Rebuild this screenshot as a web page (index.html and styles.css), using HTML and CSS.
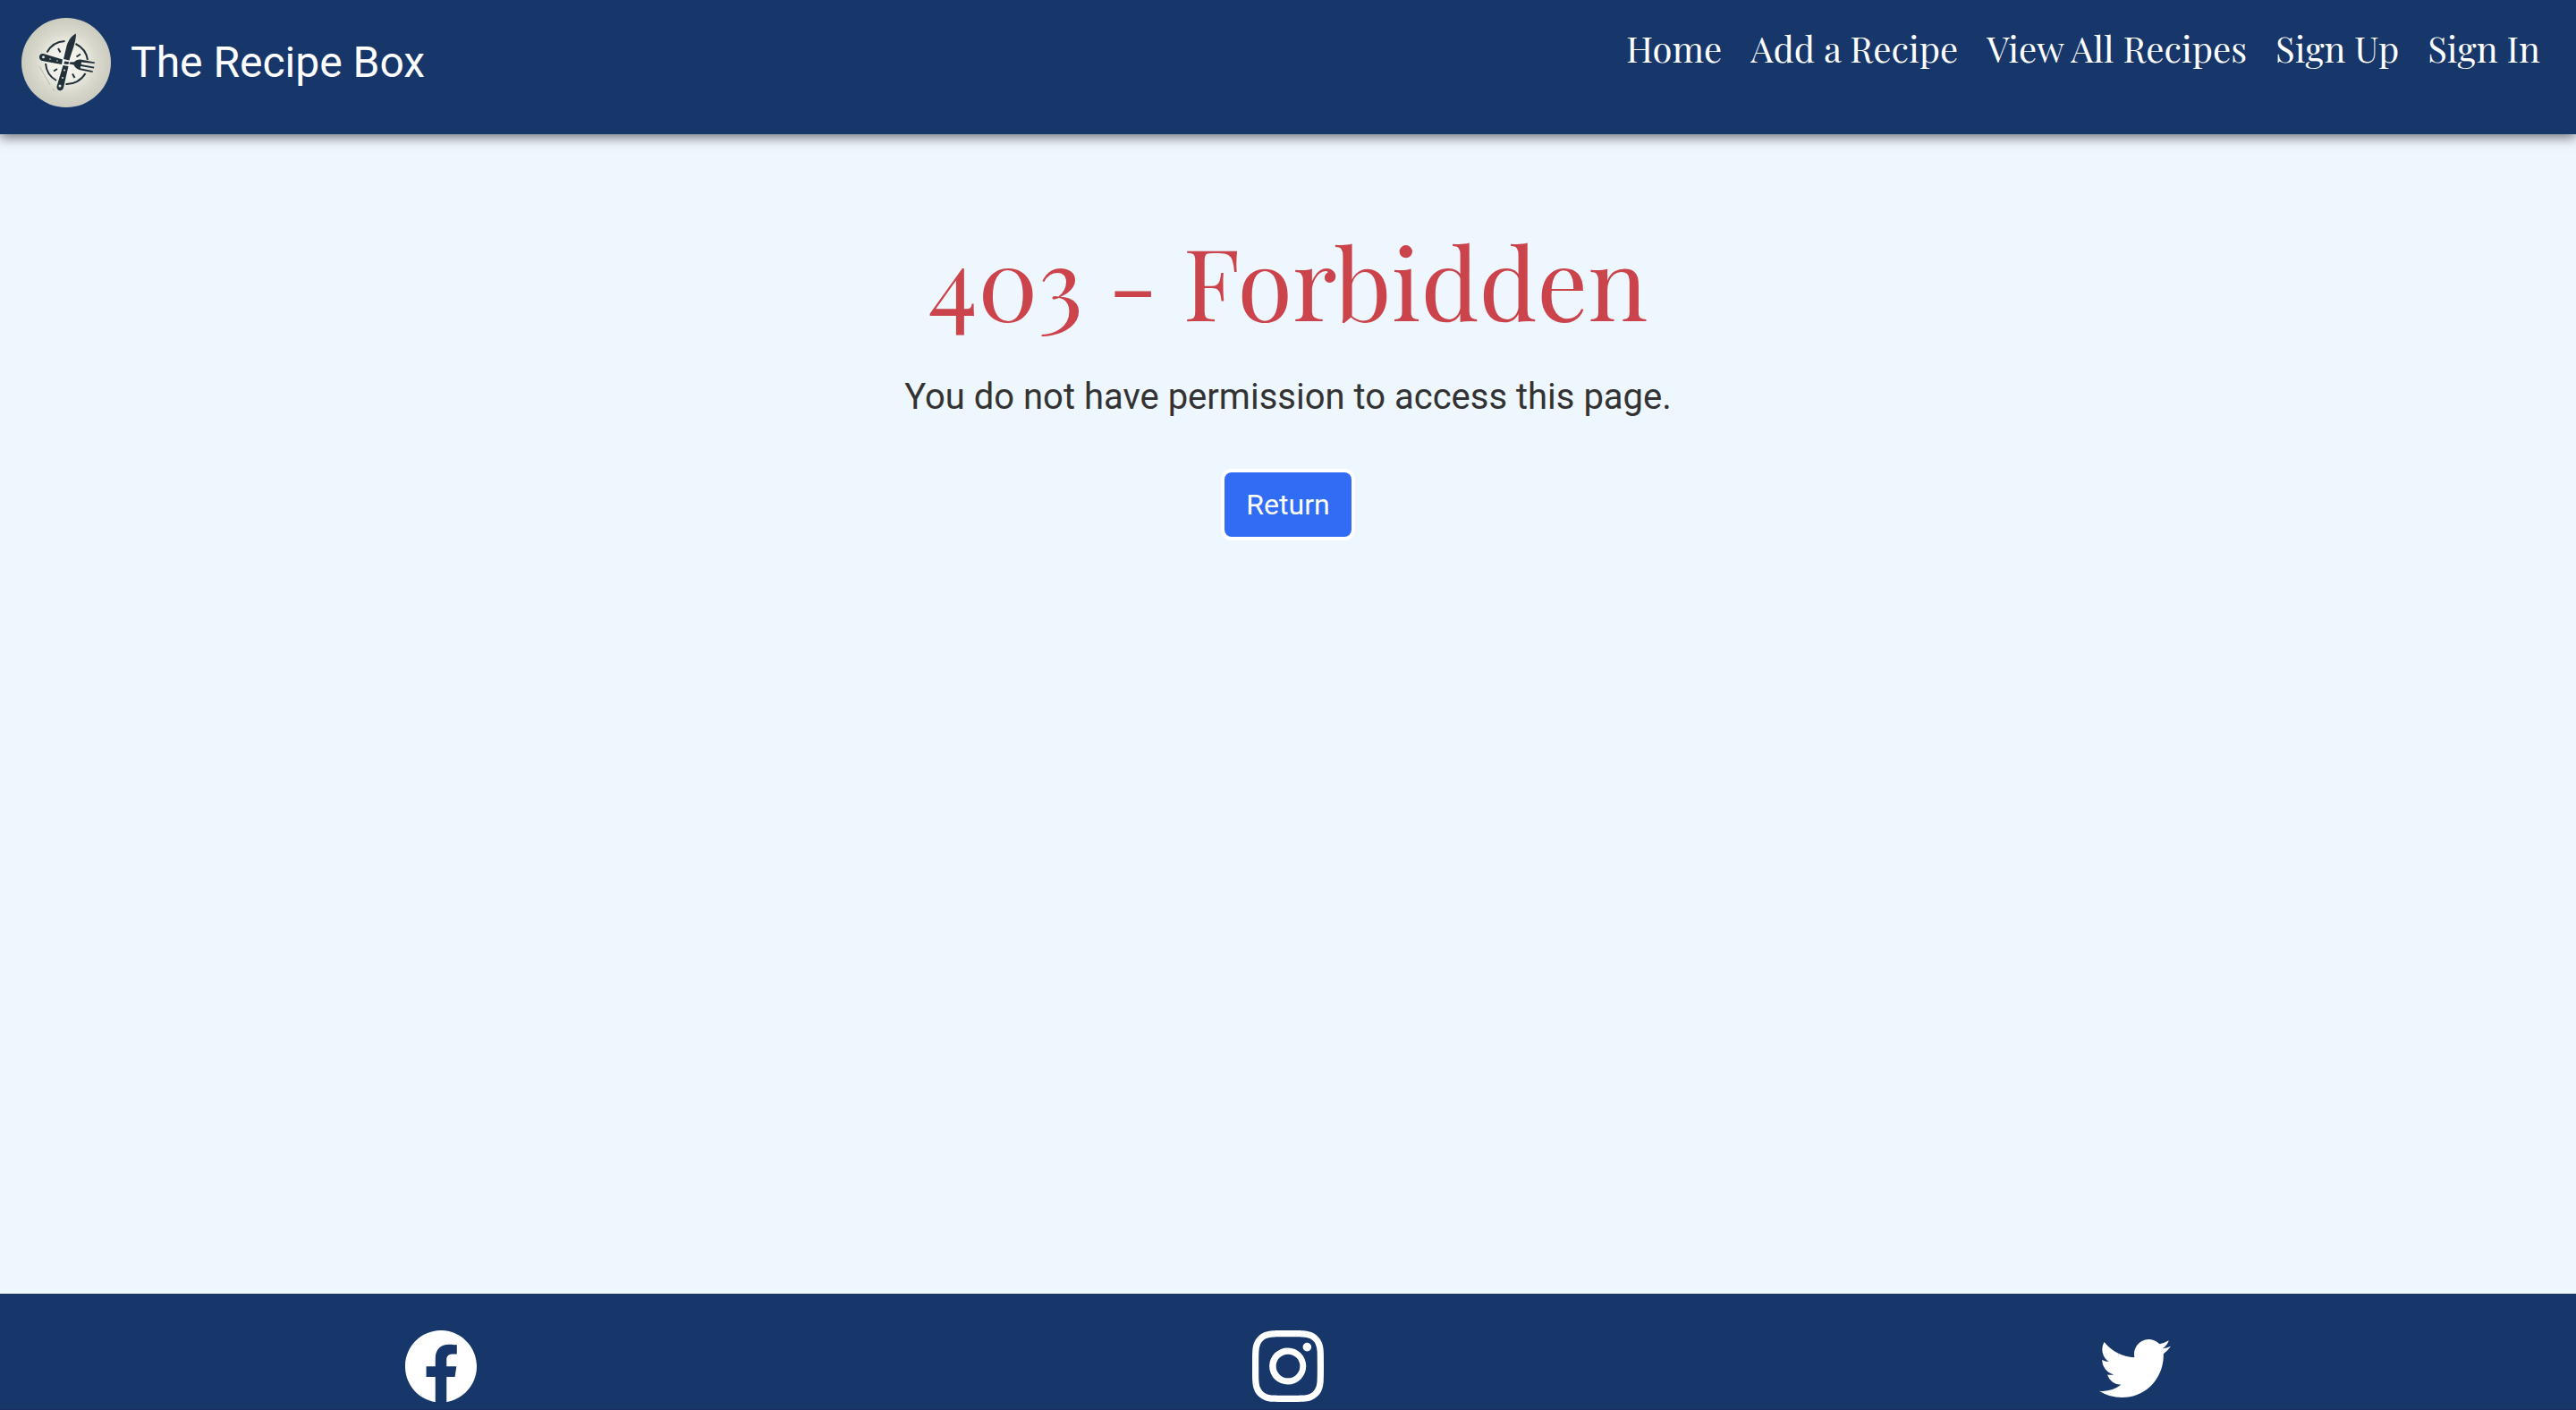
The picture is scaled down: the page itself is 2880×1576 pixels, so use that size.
FILE: index.html
```html
<!DOCTYPE html>
<html lang="en">
<head>
<meta charset="utf-8">
<title>403 - Forbidden | The Recipe Box</title>
<link rel="stylesheet" href="styles.css">
</head>
<body>
<header class="navbar">
  <a class="brand" href="#">
    <svg class="brand-logo" viewBox="0 0 100 100" aria-hidden="true">
      <defs>
        <radialGradient id="plate">
          <stop offset="0" stop-color="#f8f8f4"/>
          <stop offset=".4" stop-color="#efefe7"/>
          <stop offset=".68" stop-color="#d9d9ce"/>
          <stop offset="1" stop-color="#cccbbf"/>
        </radialGradient>
      </defs>
      <circle cx="50" cy="50" r="50" fill="url(#plate)"/>
      <g fill="none" stroke="#22303a" stroke-width="2">
        <path d="M28.500 38.500A24 24 0 0 1 48.500 26M60.500 29A24 24 0 0 1 74 47M71.500 62A24 24 0 0 1 49.500 74M39 70A24 24 0 0 1 27 51"/>
        <path d="M41 34l2.500 4.500M61.500 43.500l4.500-3M36 59.500l4-2.500M57 62.500l2.500 4.500"/>
      </g>
      <path d="M20 54l12 21M35 79l2 3" stroke="#b9b9b0" stroke-width="1" fill="none"/>
      <path fill="#22303a" d="M61 17.500c-6 3-9.500 9-11 16L47 46l6.500 1.500C56 38 61 28 61 17.500zM46.500 53l6 1-5.500 24c-1.500 5-8 4-7.500-1.500zM24.500 40l21.500 6.500-1 5.500-22-4c-5-2-3.500-9 1.500-8z"/>
      <path fill="#22303a" d="M48 48.500l5 .5-.5 3-5-.5zM54 49.500l5-.3c2-2 4-3 7-2.700l16 3-.3 1.600L67 49.500l-.3 2.500 14.600 2.800-.3 1.600-14.800-2.500-.4 2.400 14 3-.3 1.600-15-3c-3-1-5-3-6-5.400l-5-1z"/>
      <g fill="#e2e2da"><circle cx="24.500" cy="43.700" r="1.500"/><circle cx="32" cy="46" r=".8"/><circle cx="40" cy="48" r=".8"/><circle cx="43" cy="76" r="1.500"/><circle cx="46" cy="67" r="1"/><circle cx="48" cy="58.500" r="1"/></g>
    </svg>
    <span>The Recipe Box</span>
  </a>
  <nav class="nav-links" aria-label="Main">
    <a href="#">Home</a>
    <a href="#">Add a Recipe</a>
    <a href="#">View All Recipes</a>
    <a href="#">Sign Up</a>
    <a href="#">Sign In</a>
  </nav>
</header>
<main class="error-page">
  <h1>403 - Forbidden</h1>
  <p>You do not have permission to access this page.</p>
  <button class="btn" type="button">Return</button>
</main>
<footer class="footer">
  <a href="#" aria-label="Facebook"><svg viewBox="0 0 16 16"><path d="M16 8.049c0-4.446-3.582-8.050-8-8.050C3.580 0-.002 3.603-.002 8.050c0 4.017 2.926 7.347 6.750 7.951v-5.625h-2.030V8.050H6.750V6.275c0-2.017 1.195-3.131 3.022-3.131.876 0 1.791.157 1.791.157v1.980h-1.009c-.993 0-1.303.621-1.303 1.258v1.510h2.218l-.354 2.326H9.250V16c3.824-.604 6.750-3.934 6.750-7.951"/></svg></a>
  <a href="#" aria-label="Instagram"><svg viewBox="0 0 16 16"><path d="M8 0C5.829 0 5.556.010 4.703.048 3.850.088 3.269.222 2.760.420a3.900 3.900 0 0 0-1.417.923A3.900 3.900 0 0 0 .420 2.760C.222 3.268.087 3.850.048 4.700.010 5.555 0 5.827 0 8.001c0 2.172.010 2.444.048 3.297.040.852.174 1.433.372 1.942.205.526.478.972.923 1.417.444.445.890.719 1.416.923.510.198 1.090.333 1.942.372C5.555 15.990 5.827 16 8 16s2.444-.010 3.298-.048c.851-.040 1.434-.174 1.943-.372a3.900 3.900 0 0 0 1.416-.923c.445-.445.718-.891.923-1.417.197-.509.332-1.090.372-1.942C15.990 10.445 16 10.173 16 8s-.010-2.445-.048-3.299c-.040-.851-.175-1.433-.372-1.941a3.900 3.900 0 0 0-.923-1.417A3.900 3.900 0 0 0 13.240.420c-.510-.198-1.092-.333-1.943-.372C10.443.010 10.172 0 7.998 0zm-.717 1.442h.718c2.136 0 2.389.007 3.232.046.780.035 1.204.166 1.486.275.373.145.640.319.920.599s.453.546.598.920c.110.281.240.705.275 1.485.039.843.047 1.096.047 3.231s-.008 2.389-.047 3.232c-.035.780-.166 1.203-.275 1.485a2.500 2.500 0 0 1-.599.919c-.280.280-.546.453-.920.598-.280.110-.704.240-1.485.276-.843.038-1.096.047-3.232.047s-2.390-.009-3.233-.047c-.780-.036-1.203-.166-1.485-.276a2.500 2.500 0 0 1-.920-.598 2.500 2.500 0 0 1-.600-.920c-.109-.281-.240-.705-.275-1.485-.038-.843-.046-1.096-.046-3.233s.008-2.388.046-3.231c.036-.780.166-1.204.276-1.486.145-.373.319-.640.599-.920s.546-.453.920-.598c.282-.110.705-.240 1.485-.276.738-.034 1.024-.044 2.515-.045zm4.988 1.328a.960.960 0 1 0 0 1.920.960.960 0 0 0 0-1.920m-4.270 1.122a4.109 4.109 0 1 0 0 8.217 4.109 4.109 0 0 0 0-8.217m0 1.441a2.667 2.667 0 1 1 0 5.334 2.667 2.667 0 0 1 0-5.334"/></svg></a>
  <a href="#" aria-label="Twitter"><svg viewBox="0 0 16 16"><path d="M5.026 15c6.038 0 9.341-5.003 9.341-9.334q.002-.211-.006-.422A6.700 6.700 0 0 0 16 3.542a6.700 6.700 0 0 1-1.889.518 3.300 3.300 0 0 0 1.447-1.817 6.500 6.500 0 0 1-2.087.793A3.286 3.286 0 0 0 7.875 6.030a9.320 9.320 0 0 1-6.767-3.429 3.290 3.290 0 0 0 1.018 4.382A3.300 3.300 0 0 1 .640 6.575v.045a3.290 3.290 0 0 0 2.632 3.218 3.200 3.200 0 0 1-.865.115 3 3 0 0 1-.614-.057 3.280 3.280 0 0 0 3.067 2.277A6.600 6.600 0 0 1 .780 13.580a6 6 0 0 1-.780-.045A9.340 9.340 0 0 0 5.026 15"/></svg></a>
</footer>
</body>
</html>
```

FILE: styles.css
```css
*, *::before, *::after { box-sizing: border-box; }

body {
  display: flex;
  flex-direction: column;
  min-height: 100vh;
  margin: 0;
  background: #eef6fe;
  color: #333;
  font: 40px/60px Roboto, sans-serif;
}

a { color: #fff; text-decoration: none; }

.navbar {
  display: flex;
  justify-content: space-between;
  align-items: flex-start;
  padding: 20px 24px 30px;
  background: #17376b;
  box-shadow: 0 4px 12px rgba(0, 0, 0, .5);
}

.brand {
  display: flex;
  align-items: center;
  gap: 22px;
  font-size: 48px;
}

.brand-logo { width: 100px; height: 100px; }

.nav-links {
  display: flex;
  gap: 32px;
  padding: 4px 16px;
  font-family: "Playfair Display", "Liberation Serif", serif;
}

.error-page {
  flex: 1;
  display: flex;
  flex-direction: column;
  align-items: center;
  padding: 96px 24px;
  text-align: center;
}

h1 {
  margin: 0 0 34px;
  color: #cc444b;
  font: 400 112px/134px "Playfair Display", "Liberation Serif", serif;
}

p { margin: 0 0 54px; }

.btn {
  padding: 12px 24px;
  border: 0;
  border-radius: 8px;
  background: #316cf4;
  box-shadow: 0 0 0 4px #fff;
  color: #fff;
  font: 32px/48px Roboto, sans-serif;
}

.footer {
  display: grid;
  grid-template-columns: repeat(3, 1fr);
  justify-items: center;
  padding: 41px 20px 8px;
  border-bottom: 1px solid #1a2d62;
  background: #17376b;
}

.footer a { display: flex; }
.footer svg { width: 80px; height: 80px; fill: #fff; }
```
